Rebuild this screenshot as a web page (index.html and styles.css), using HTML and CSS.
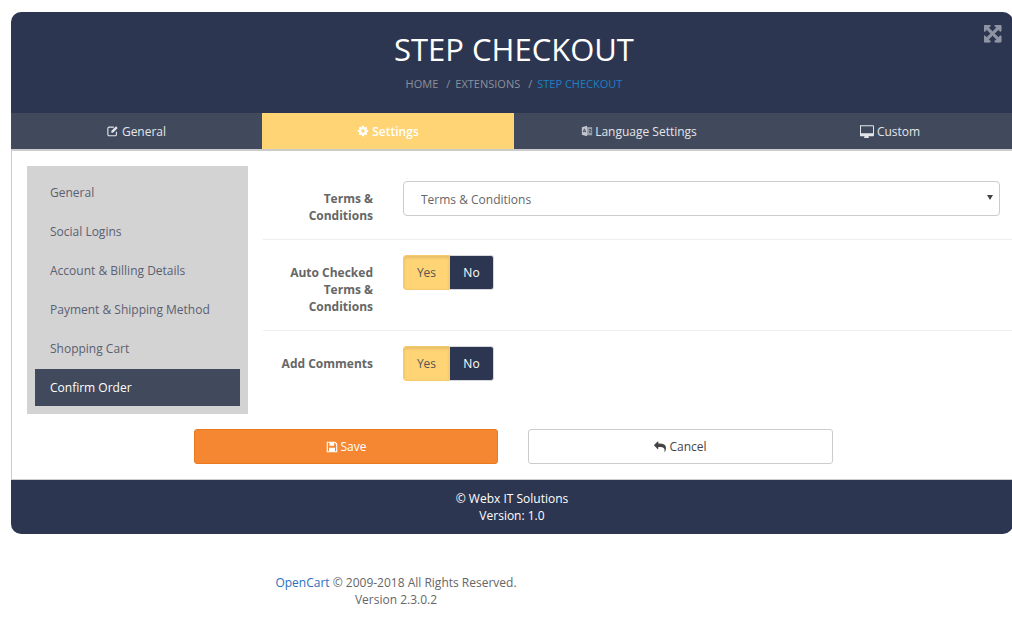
FILE: index.html
```html
<!DOCTYPE html>
<html lang="en">
<head>
<meta charset="utf-8">
<title>Step Checkout</title>
<link rel="stylesheet" href="styles.css">
</head>
<body>
<div class="panel">
  <header class="hero">
    <svg class="expand" viewBox="0 0 1792 1792"><path d="M1283 413l-355 355 355 355 144-144q29-31 70-14 39 17 39 59v448q0 26-19 45t-45 19h-448q-42 0-59-40-17-39 14-69l144-144-355-355-355 355 144 144q31 30 14 69-17 40-59 40h-448q-26 0-45-19t-19-45v-448q0-42 40-59 39-17 69 14l144 144 355-355-355-355-144 144q-19 19-45 19-12 0-24-5-40-17-40-59v-448q0-26 19-45t45-19h448q42 0 59 40 17 39-14 69l-144 144 355 355 355-355-144-144q-31-30-14-69 17-40 59-40h448q26 0 45 19t19 45v448q0 42-39 59-13 5-25 5-26 0-45-19z"/></svg>
    <h1 class="title">STEP CHECKOUT</h1>
    <div class="crumbs"><span>HOME</span><span class="sep">/</span><span>EXTENSIONS</span><span class="sep">/</span><span class="current">STEP CHECKOUT</span></div>
  </header>
  <nav class="tabs">
    <a class="tab"><svg class="ico" viewBox="0 0 14 14"><path class="line" d="M11 8v3a1.500 1.500 0 0 1-1.500 1.500h-7A1.500 1.500 0 0 1 1 11V4a1.500 1.500 0 0 1 1.500-1.500H8"/><path d="M5 7l5.500-5.500 2 2L7 9H5z"/></svg>General</a>
    <a class="tab tab-active"><svg class="ico" viewBox="0 0 1792 1792"><path d="M1152 896q0-106-75-181t-181-75-181 75-75 181 75 181 181 75 181-75 75-181zm512-109v222q0 12-8 23t-20 13l-185 28q-19 54-39 91 35 50 107 138 10 12 10 25t-9 23q-27 37-99 108t-94 71q-12 0-26-9l-138-108q-44 23-91 38-16 136-29 186-7 28-36 28h-222q-14 0-24.500-8.500t-11.500-21.500l-28-184q-49-16-90-37l-141 107q-10 9-25 9-14 0-25-11-126-114-165-168-7-10-7-23 0-12 8-23 15-21 51-66.500t54-70.500q-27-50-41-99l-183-27q-13-2-21-12.500t-8-23.500v-222q0-12 8-23t19-13l186-28q14-46 39-92-40-57-107-138-10-12-10-24 0-10 9-23 26-36 98.500-107.500t94.500-71.500q13 0 26 10l138 107q44-23 91-38 16-136 29-186 7-28 36-28h222q14 0 24.500 8.500t11.500 21.500l28 184q49 16 90 37l142-107q9-9 24-9 13 0 25 10 129 119 165 170 7 8 7 22 0 12-8 23-15 21-51 66.500t-54 70.500q26 50 41 98l183 28q13 2 21 12.500t8 23.500z"/></svg>Settings</a>
    <a class="tab"><svg class="ico ico-lang" viewBox="0 0 14 14"><path class="soft" d="M1 2.500l6-1.500v12l-6-1.500z"/><path class="soft-b" d="M7 2.500h6v9.500H7z"/><path class="line-dark" d="M2.500 8.500L4 4.500l1.500 4M3 7.500h2M9 5.500h3M10.500 5v1M9.500 9c1-.5 2-1.500 2-3M9.500 7c.5 1 1.500 2 2.500 2"/></svg>Language Settings</a>
    <a class="tab"><svg class="ico ico-wide" viewBox="0 0 1792 1792"><path d="M1664 992v-832q0-13-9.500-22.500t-22.500-9.500h-1472q-13 0-22.500 9.500t-9.500 22.500v832q0 13 9.500 22.500t22.500 9.500h1472q13 0 22.500-9.500t9.500-22.500zm128-832v1088q0 66-47 113t-113 47h-544q0 37 16 77.500t32 71 16 43.500q0 26-19 45t-45 19h-512q-26 0-45-19t-19-45q0-14 16-44t32-70 16-78h-544q-66 0-113-47t-47-113v-1088q0-66 47-113t113-47h1632q66 0 113 47t47 113z" transform="translate(0 170)"/></svg>Custom</a>
  </nav>
  <main class="body">
    <div class="columns">
      <ul class="side">
        <li class="side-item">General</li>
        <li class="side-item">Social Logins</li>
        <li class="side-item">Account &amp; Billing Details</li>
        <li class="side-item">Payment &amp; Shipping Method</li>
        <li class="side-item">Shopping Cart</li>
        <li class="side-item side-active">Confirm Order</li>
      </ul>
      <form class="form">
        <div class="row row-first">
          <label class="label">Terms &amp; Conditions</label>
          <div class="select-wrap"><select class="select"><option>Terms &amp; Conditions</option></select></div>
        </div>
        <div class="row">
          <label class="label">Auto Checked Terms &amp; Conditions</label>
          <div class="toggle"><span class="yes">Yes</span><span class="no">No</span></div>
        </div>
        <div class="row row-last">
          <label class="label">Add Comments</label>
          <div class="toggle"><span class="yes">Yes</span><span class="no">No</span></div>
        </div>
      </form>
    </div>
    <div class="actions">
      <a class="btn btn-save"><svg class="ico" viewBox="0 0 14 14"><path class="line" d="M1.500 1.500h9l2 2v9h-11z"/><path d="M4 1.500h5.500v4H4zM3.500 8h7v4.500h-7z"/></svg>Save</a>
      <a class="btn btn-cancel"><svg class="ico" viewBox="0 0 1792 1792"><path d="M1792 1120q0 166-127 451-3 7-10.500 24t-13.500 30-13 22q-12 17-28 17-15 0-23.500-10t-8.500-25q0-9 2.500-26.500t2.500-23.500q5-68 5-123 0-101-17.500-181t-48.500-138.500-80-101-105.500-69.500-133-42.500-154-21.500-175.500-6h-224v256q0 26-19 45t-45 19-45-19l-512-512q-19-19-19-45t19-45l512-512q19-19 45-19t45 19 19 45v256h224q713 0 875 403 53 134 53 333z"/></svg>Cancel</a>
    </div>
  </main>
  <footer class="foot">
    <div>© Webx IT Solutions</div>
    <div>Version: 1.0</div>
  </footer>
</div>
<footer class="page-foot">
  <div><a class="link">OpenCart</a> © 2009-2018 All Rights Reserved.</div>
  <div>Version 2.3.0.2</div>
</footer>
</body>
</html>
```
FILE: styles.css
```css
* { box-sizing: border-box; }
html, body { margin: 0; padding: 0; background: #fff; }
body {
  font-family: "Open Sans", sans-serif;
  font-size: 12px;
  line-height: 17px;
  color: #666;
  overflow-x: hidden;
}
.panel { margin: 12px 0 0 11px; width: 1002px; }
.hero {
  position: relative;
  height: 101px;
  background: #2d3650;
  border-radius: 10px 10px 0 0;
  text-align: center;
  padding: 17px 0 0 4px;
}
.expand {
  position: absolute;
  top: 12.500px;
  right: 9px;
  width: 20px;
  height: 20px;
  fill: #8f95a3;
  stroke: #8f95a3;
  stroke-width: 70;
}
.title { margin: 0; font-size: 31px; line-height: 40px; font-weight: 400; color: #fff; }
.crumbs { margin-top: 6px; color: #8b909c; font-size: 11px; line-height: 17px; }
.sep { margin: 0 5px 0 8px; }
.current { color: #1b80c4; }
.tabs {
  display: grid;
  grid-template-columns: 251px 252px 250px 252px;
  height: 38px;
  background: #414a5c;
  border-bottom: 2px solid #ccc;
  overflow: hidden;
}
.tab {
  display: flex;
  align-items: center;
  justify-content: center;
  color: #e3e5ea;
  font-size: 12px;
}
.tab-active { background: #ffd475; color: #fff; font-weight: 600; }
.ico { width: 12px; height: 12px; margin-right: 3px; fill: currentColor; }
.ico-lang { margin-right: 2px; }
.ico-wide { width: 14px; height: 14px; }
.line { fill: none; stroke: currentColor; stroke-width: 1.300; }
.soft { fill: currentColor; opacity: .8; }
.soft-b { fill: currentColor; opacity: .55; }
.line-dark { fill: none; stroke: #414a5c; stroke-width: 1; }
.body { border-left: 1px solid #ccc; height: 328px; }
.columns { display: flex; }
.side {
  list-style: none;
  margin: 15px 0 0 15px;
  padding: 8px;
  width: 221px;
  height: 248px;
  background: #d3d3d3;
  display: flex;
  flex-direction: column;
  gap: 2px;
}
.side-item {
  height: 37px;
  display: flex;
  align-items: center;
  padding-left: 15px;
  color: #5a6072;
}
.side-active { background: #414a5c; color: #fff; }
.form { margin-left: 15px; flex: 1; }
.row {
  display: flex;
  align-items: flex-start;
  padding: 15px 13px 15px 0;
  border-bottom: 1px solid #eee;
}
.row-first { padding-top: 30px; }
.row-last { border-bottom: 0; }
.label {
  width: 110px;
  flex: none;
  text-align: right;
  font-weight: 700;
  color: #666;
  padding-top: 9px;
}
.select-wrap { margin-left: 30px; flex: 1; position: relative; }
.select-wrap::after {
  content: "";
  position: absolute;
  top: 14px;
  right: 7px;
  border-style: solid;
  border-width: 5px 3px 0;
  border-color: #444 transparent transparent;
}
.select {
  display: block;
  width: 100%;
  height: 35px;
  font: inherit;
  color: #666;
  padding: 2px 14px 0 17px;
  background: #fff;
  border: 1px solid #ccc;
  border-radius: 4px;
  appearance: none;
}
.toggle { margin-left: 30px; display: flex; height: 35px; border-radius: 3px; overflow: hidden; }
.yes {
  width: 47px;
  display: flex;
  align-items: center;
  justify-content: center;
  background: #ffd475;
  color: #555;
  box-shadow: inset 0 2px 3px rgba(0, 0, 0, .1);
  border: 1px solid #f5ca6a;
  border-radius: 3px 0 0 3px;
}
.no {
  width: 44px;
  display: flex;
  align-items: center;
  justify-content: center;
  background: #2d3650;
  color: #fff;
  font-weight: 500;
  border: 1px solid #d5d7dc;
  border-left: 0;
  border-radius: 0 3px 3px 0;
}
.actions { display: flex; gap: 30px; margin: 15px 0 0 182px; }
.btn {
  width: 304px;
  height: 35px;
  display: flex;
  align-items: center;
  justify-content: center;
  border-radius: 3px;
  border: 1px solid #ccc;
}
.btn-save { background: #f58733; border-color: #ea7a20; color: #fff; }
.btn-cancel { width: 305px; background: #fff; color: #444; }
.foot {
  height: 55px;
  background: #2d3650;
  border-top: 1px solid #ccc;
  border-radius: 0 0 10px 10px;
  color: #fff;
  text-align: center;
  font-weight: 500;
  padding-top: 10px;
}
.page-foot { width: 792px; margin-top: 40px; text-align: center; }
.link { color: #2a6fc0; }
```
